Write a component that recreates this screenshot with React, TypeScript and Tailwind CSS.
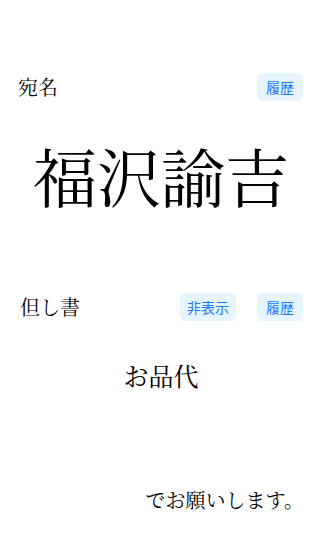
const serif = "font-['Noto_Serif_CJK_JP','Liberation_Serif','Noto_Sans_CJK_JP',serif]";

function Btn({ label, w }: { label: string; w: string }) {
  return (
    <button className={`${w} h-[28px] rounded-[6px] bg-[#e6f4ff] text-[#1677ff] text-[14px] leading-none font-['Noto_Sans_CJK_JP',sans-serif]`}>
      {label}
    </button>
  );
}

export default function App() {
  return (
    <div className={`w-[322px] h-[551px] bg-white text-black ${serif}`}>
      <div className="pt-[73px] pl-[18px] pr-[19px] flex items-center justify-between">
        <span className="text-[20px] leading-none">宛名</span>
        <Btn label="履歴" w="w-[46px]" />
      </div>
      <div className="mt-[41px] text-center text-[64px] leading-none">福沢諭吉</div>
      <div className="mt-[87px] pl-[20px] pr-[19px] flex items-center">
        <span className="text-[20px] leading-none flex-1">但し書</span>
        <div className="flex gap-[21px]">
          <Btn label="非表示" w="w-[56px]" />
          <Btn label="履歴" w="w-[46px]" />
        </div>
      </div>
      <div className="mt-[42px] text-center text-[25px] leading-none">お品代</div>
      <div className="mt-[102px] pr-[18px] text-right text-[20px] leading-none">でお願いします。</div>
    </div>
  );
}
